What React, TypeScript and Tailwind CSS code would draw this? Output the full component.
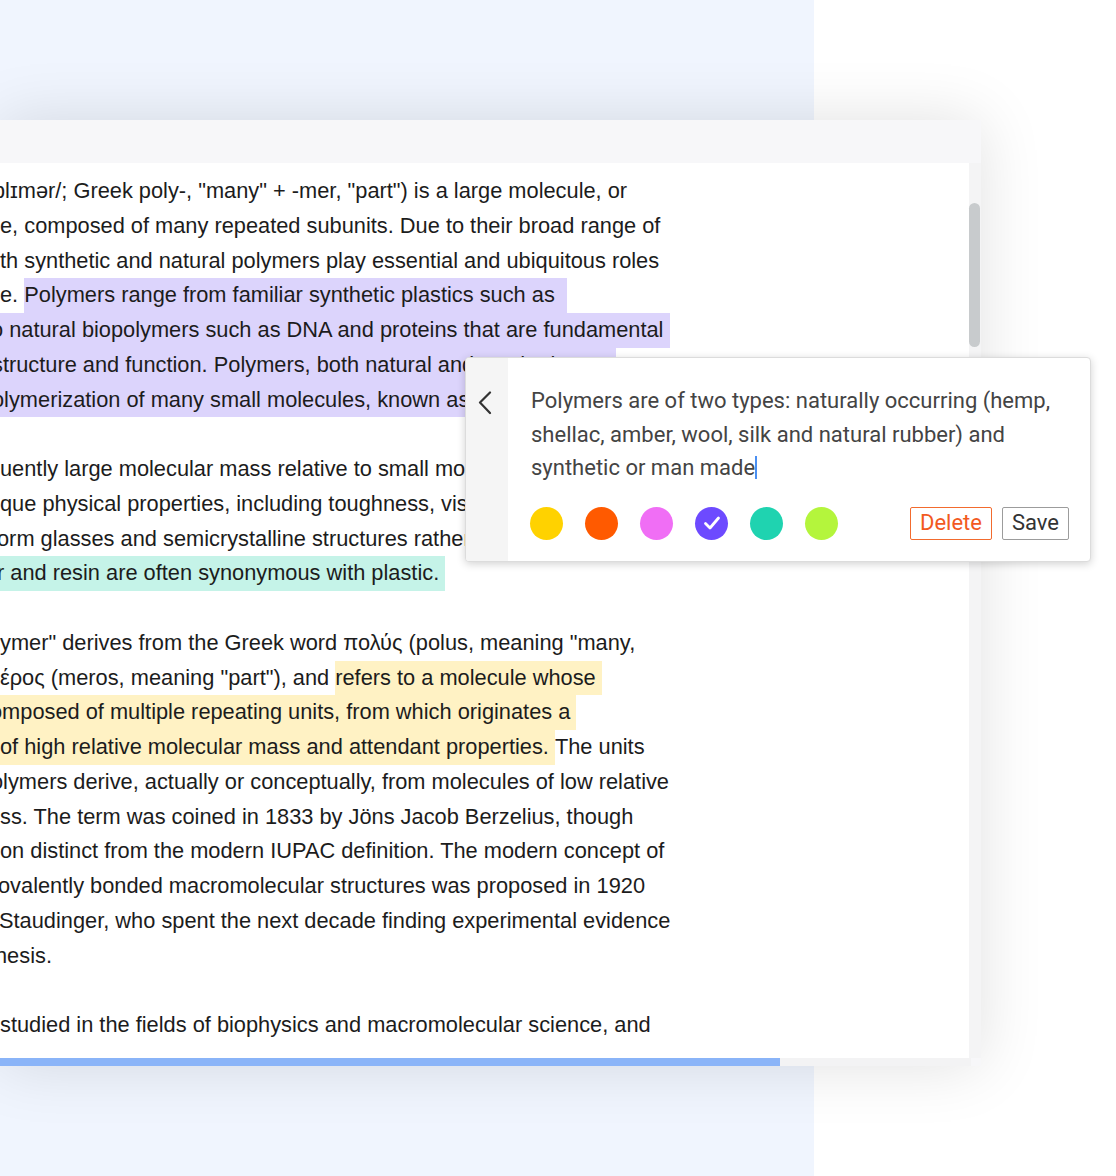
import React from 'react'

type Seg = { t: string; hl?: 'purple' | 'teal' | 'yellow' }
type Line = { shift?: string; segs: Seg[] } | null

const HIGHLIGHT = {
	purple: 'bg-[#dcd4fc]',
	teal: 'bg-[#c5f3e8]',
	yellow: 'bg-[#fff2c4]',
}

const lines: Line[] = [
	{ shift: '-ml-[7px]', segs: [{ t: 'ɒlɪmər/; Greek poly-, "many" + -mer, "part") is a large molecule, or' }] },
	{ segs: [{ t: 'e, composed of many repeated subunits. Due to their broad range of' }] },
	{ segs: [{ t: 'th synthetic and natural polymers play essential and ubiquitous roles' }] },
	{
		segs: [
			{ t: 'e. ' },
			{ t: 'Polymers range from familiar synthetic plastics such as\u00a0\u00a0', hl: 'purple' },
		],
	},
	{
		shift: '-ml-[9px]',
		segs: [{ t: 'o natural biopolymers such as DNA and proteins that are fundamental\u00a0', hl: 'purple' }],
	},
	{
		shift: '-ml-[8px]',
		segs: [{ t: 'structure and function. Polymers, both natural and synthetic, are\u00a0', hl: 'purple' }],
	},
	{
		shift: '-ml-[8px]',
		segs: [{ t: 'olymerization of many small molecules, known as monomers.', hl: 'purple' }],
	},
	null,
	{ segs: [{ t: 'uently large molecular mass relative to small molecule compounds produces' }] },
	{ segs: [{ t: 'que physical properties, including toughness, viscoelasticity, and a tendency to' }] },
	{ shift: '-ml-[3px]', segs: [{ t: 'orm glasses and semicrystalline structures rather than crystals.' }] },
	{ shift: '-ml-[3px]', segs: [{ t: 'r and resin are often synonymous with plastic.\u00a0', hl: 'teal' }] },
	null,
	{ segs: [{ t: 'ymer" derives from the Greek word πολύς (polus, meaning "many,' }] },
	{
		segs: [
			{ t: 'έρος (meros, meaning "part"), and ' },
			{ t: 'refers to a molecule whose\u00a0', hl: 'yellow' },
		],
	},
	{
		shift: '-ml-[10px]',
		segs: [{ t: 'omposed of multiple repeating units, from which originates a\u00a0', hl: 'yellow' }],
	},
	{
		segs: [
			{ t: 'of high relative molecular mass and attendant properties.\u00a0', hl: 'yellow' },
			{ t: 'The units' },
		],
	},
	{ shift: '-ml-[9px]', segs: [{ t: 'olymers derive, actually or conceptually, from molecules of low relative' }] },
	{ segs: [{ t: 'ss. The term was coined in 1833 by Jöns Jacob Berzelius, though' }] },
	{ segs: [{ t: 'on distinct from the modern IUPAC definition. The modern concept of' }] },
	{ shift: '-ml-[2px]', segs: [{ t: 'ovalently bonded macromolecular structures was proposed in 1920' }] },
	{ shift: '-ml-[1px]', segs: [{ t: 'Staudinger, who spent the next decade finding experimental evidence' }] },
	{ shift: '-ml-[5px]', segs: [{ t: 'hesis.' }] },
	null,
	{ segs: [{ t: 'studied in the fields of biophysics and macromolecular science, and' }] },
]

const swatches = [
	{ color: 'bg-[#ffd200]', checked: false },
	{ color: 'bg-[#ff5a00]', checked: false },
	{ color: 'bg-[#f06ef5]', checked: false },
	{ color: 'bg-[#6d4aff]', checked: true },
	{ color: 'bg-[#1fd3b0]', checked: false },
	{ color: 'bg-[#b4f53c]', checked: false },
]

const DocumentText = () => {
	return (
		<div className="pt-[11px] text-[21.8px] text-[#1c1c1c] font-['Liberation_Sans',Arial,sans-serif]">
			{lines.map((line, i) =>
				line ? (
					<div key={i} className={`h-[34.75px] leading-[34.75px] whitespace-nowrap ${line.shift ?? ''}`}>
						{line.segs.map((seg, j) =>
							seg.hl ? (
								<span key={j} className={`inline-block h-[34.75px] ${HIGHLIGHT[seg.hl]}`}>
									{seg.t}
								</span>
							) : (
								<span key={j}>{seg.t}</span>
							)
						)}
					</div>
				) : (
					<div key={i} className="h-[34.75px]" />
				)
			)}
		</div>
	)
}

const NotePopup = () => {
	return (
		<div className="absolute left-[465px] top-[237px] w-[626px] flex rounded-[4px] border border-[#dcdcdc] bg-white shadow-[0_2px_8px_rgba(0,0,0,0.18)] overflow-hidden font-['Roboto',sans-serif]">
			<div className="w-[42px] shrink-0 bg-[#f5f5f5] flex justify-center pt-[33px] pr-[4px]">
				<svg width="16" height="24" viewBox="0 0 16 24" fill="none">
					<path d="M13 1.5 L3 11.5 L13 22" stroke="#333" strokeWidth="2.2" strokeLinecap="round" strokeLinejoin="round" />
				</svg>
			</div>

			<div className="flex-1 pl-[23px] pr-[21px] pt-[26px] pb-[21px]">
				<p className="text-[22px] leading-[33.5px] text-[#444] whitespace-nowrap">
					Polymers are of two types: naturally occurring (hemp,
					<br />
					shellac, amber, wool, silk and natural rubber) and
					<br />
					synthetic or man made
					<span className="inline-block w-[2px] h-[23px] bg-[#4a8ff2] align-[-4px]" />
				</p>

				<div className="mt-[22px] flex items-center">
					<div className="flex items-center gap-[22px] -ml-[1px]">
						{swatches.map((s, i) => (
							<div key={i} className={`w-[33px] h-[33px] rounded-full flex items-center justify-center ${s.color}`}>
								{s.checked && (
									<svg width="22" height="22" viewBox="0 0 22 22" fill="none">
										<path d="M4.5 11.5 L9 16 L17.5 6" stroke="white" strokeWidth="2.8" strokeLinecap="round" strokeLinejoin="round" />
									</svg>
								)}
							</div>
						))}
					</div>

					<div className="ml-auto flex gap-[10px]">
						<button className="h-[33px] px-[9px] rounded-[2px] border border-[#f26b2e] text-[22px] leading-none text-[#f25a1f]">
							Delete
						</button>
						<button className="h-[33px] px-[9px] rounded-[2px] border border-[#9c9c9c] text-[22px] leading-none text-[#333]">
							Save
						</button>
					</div>
				</div>
			</div>
		</div>
	)
}

const App = () => {
	return (
		<div className="w-[1116px] h-[1176px] overflow-hidden bg-[linear-gradient(to_right,#f0f5fe_814px,#ffffff_814px)] pt-[120px]">
			<div className="relative w-[981px] flex flex-col bg-[#f7f7f9] shadow-[0_0_60px_rgba(0,0,0,0.12)]">
				<div className="h-[43px]" />

				<div className="flex h-[895px]">
					<div className="flex-1 bg-white overflow-hidden">
						<DocumentText />
					</div>
					<div className="w-[12px] bg-[#f4f4f5] pt-[40px]">
						<div className="w-[11px] h-[144px] rounded-full bg-[#c8cbcd]" />
					</div>
				</div>

				<div className="h-[8px] flex">
					<div className="w-[780px] bg-[#8ab4f8]" />
					<div className="w-[191px] bg-[#f3f3f4]" />
				</div>

				<NotePopup />
			</div>
		</div>
	)
}

export default App
